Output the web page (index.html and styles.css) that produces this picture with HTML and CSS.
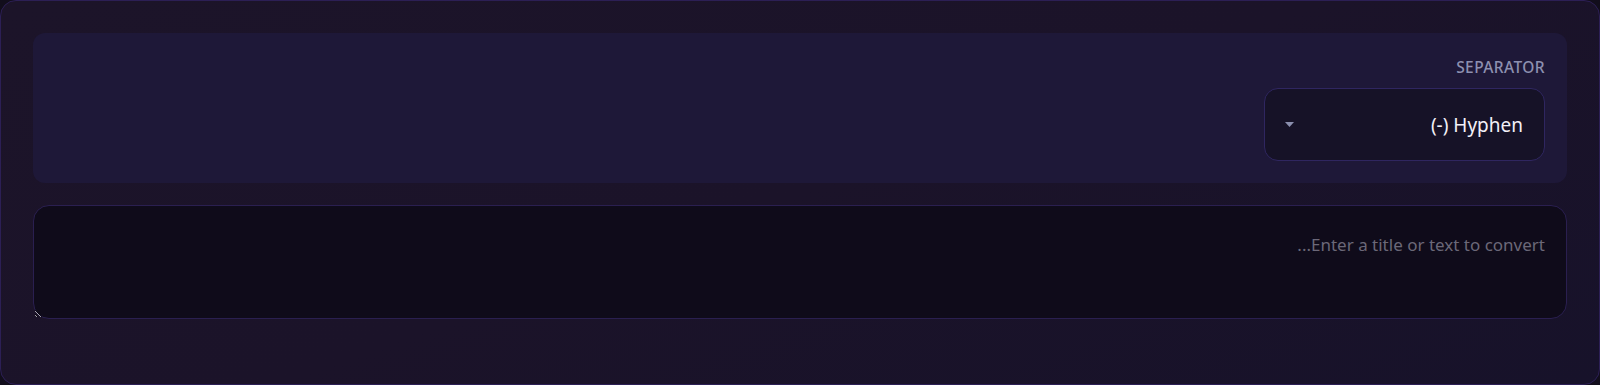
FILE: index.html
```html
<!DOCTYPE html>
<html lang="en" dir="rtl">
<head>
<meta charset="utf-8">
<title>Converter</title>
<link rel="stylesheet" href="styles.css">
</head>
<body>
<div class="card">
  <div class="panel">
    <label class="field-label">SEPARATOR</label>
    <div class="select">
      <span class="select-value">Hyphen (-)</span>
      <svg class="caret" width="9" height="5" viewBox="0 0 9 5"><path d="M0 0h9L4.5 5z" fill="#8b8fae"/></svg>
    </div>
  </div>
  <textarea class="input" placeholder="Enter a title or text to convert..."></textarea>
</div>
</body>
</html>
```
FILE: styles.css
```css
* { box-sizing: border-box; }
html, body { margin: 0; padding: 0; background: #120e1c; }
body { font-family: "Noto Sans", "Open Sans", sans-serif; }
.card {
  width: 1600px;
  height: 385px;
  border: 1px solid #2c1f55;
  border-radius: 16px;
  padding: 32px 32px;
  background: linear-gradient(160deg, #1c1429 0%, #1b1329 50%, #17122a 100%);
  display: flex;
  flex-direction: column;
  gap: 22px;
}
.panel {
  background: #1e1838;
  border-radius: 12px;
  padding: 24px 22px 22px;
  display: flex;
  flex-direction: column;
  align-items: flex-start;
}
.field-label {
  font-size: 15.5px;
  line-height: 20px;
  letter-spacing: 0.4px;
  color: #8d90b0;
  font-weight: 500;
  margin-bottom: 11px;
}
.select {
  width: 281px;
  height: 73px;
  border: 1px solid #2f2660;
  border-radius: 14px;
  background: #161227;
  display: flex;
  align-items: center;
  justify-content: space-between;
  padding: 0 21px 0 20px;
}
.select-value {
  color: #f2f0f7;
  font-size: 19px;
}
.caret { display: block; }
.input {
  width: 100%;
  height: 114px;
  border: 1px solid #2a1f50;
  border-radius: 16px;
  background: #0f0b1a;
  padding: 27px 21px;
  font-family: "Noto Sans", "Open Sans", sans-serif;
  font-size: 17px;
  color: #e0dde8;
  outline: none;
  resize: vertical;
}
.input::placeholder { color: #6b6878; }
```
